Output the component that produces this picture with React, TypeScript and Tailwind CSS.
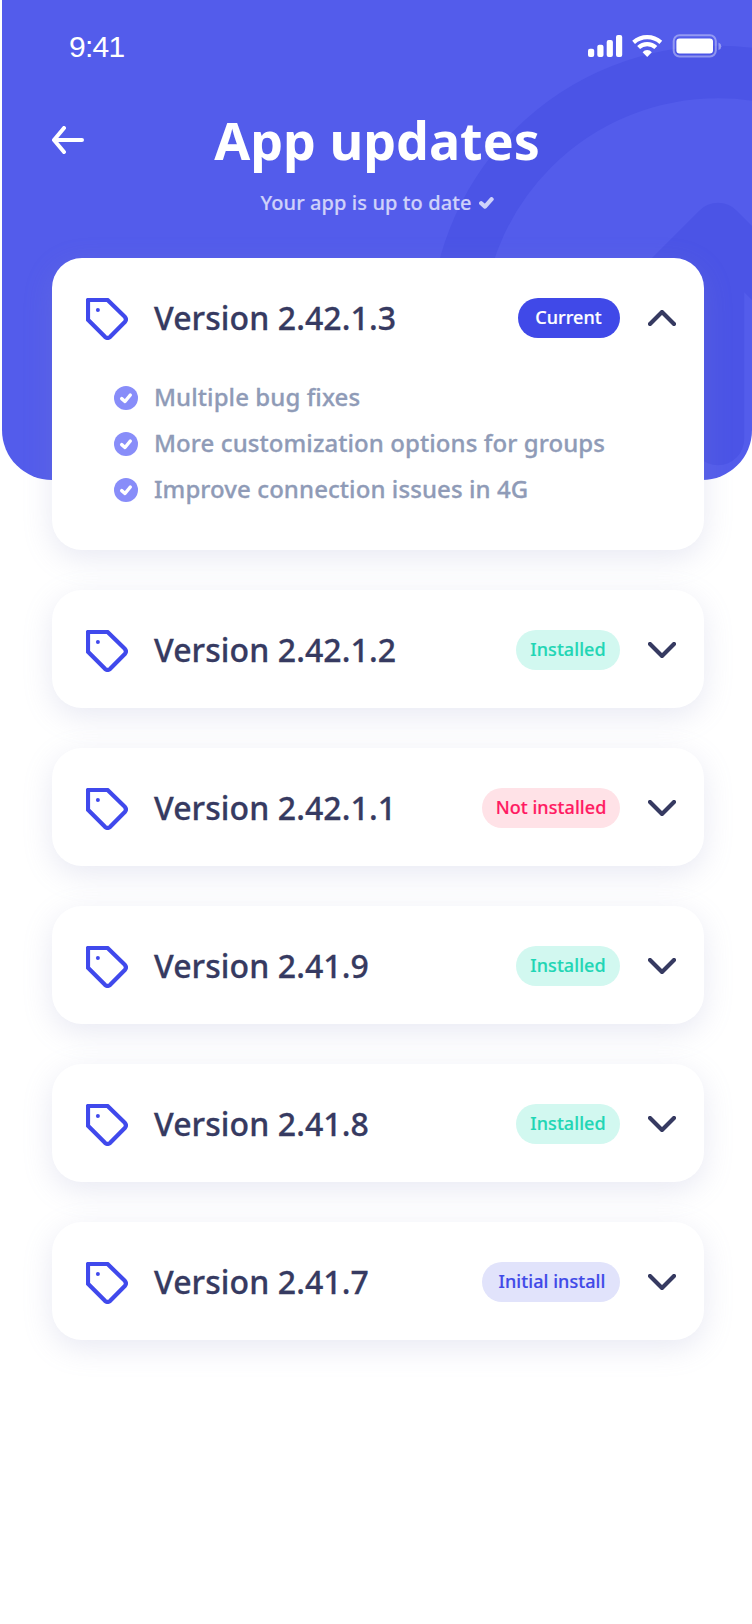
import React from "react";

type Tone = "current" | "installed" | "missing" | "initial";

interface Release {
  version: string;
  status: string;
  tone: Tone;
  notes?: string[];
}

const releases: Release[] = [
  {
    version: "Version 2.42.1.3",
    status: "Current",
    tone: "current",
    notes: [
      "Multiple bug fixes",
      "More customization options for groups",
      "Improve connection issues in 4G",
    ],
  },
  { version: "Version 2.42.1.2", status: "Installed", tone: "installed" },
  { version: "Version 2.42.1.1", status: "Not installed", tone: "missing" },
  { version: "Version 2.41.9", status: "Installed", tone: "installed" },
  { version: "Version 2.41.8", status: "Installed", tone: "installed" },
  { version: "Version 2.41.7", status: "Initial install", tone: "initial" },
];

const tones: Record<Tone, string> = {
  current: "w-[102px] bg-[#4049e8] pr-px text-white",
  installed: "w-[104px] bg-[#d2f8f0] text-[#1fd6b5]",
  missing: "w-[138px] bg-[#ffe2e7] text-[#ff1a62]",
  initial: "w-[138px] bg-[#e1e3fb] pl-[2px] text-[#4049e8]",
};

function TagIcon() {
  return (
    <svg className="mt-10 size-[42px] shrink-0" viewBox="0 0 42 42" fill="none">
      <path
        d="M2 2H21.6L38.8 18.8Q41 21.5 38.8 24L24.2 38.8Q21.5 41 19 38.8L2 21.8Z"
        stroke="#4049ec"
        strokeWidth="4.2"
        strokeLinejoin="round"
      />
      <circle cx="11.9" cy="12" r="2" fill="#4049ec" />
    </svg>
  );
}

function Chevron({ open }: { open: boolean }) {
  return (
    <svg className="mt-[52px] ml-7 h-4 w-7 shrink-0" viewBox="0 0 28 16" fill="none">
      <path
        d={open ? "M2 14L14 2L26 14" : "M2 2L14 14L26 2"}
        stroke="#363a61"
        strokeWidth="4.2"
        strokeLinecap="round"
        strokeLinejoin="round"
      />
    </svg>
  );
}

function Note({ text }: { text: string }) {
  return (
    <li className="flex h-[46px] items-center gap-4">
      <svg className="size-6 shrink-0" viewBox="0 0 24 24" fill="none">
        <circle cx="12" cy="12" r="12" fill="#888df9" />
        <path d="M7.7 12.6L11 15.5L16.3 9" stroke="white" strokeWidth="3.4" strokeLinecap="round" strokeLinejoin="round" />
      </svg>
      <span className="pb-[2px] text-2xl font-medium tracking-[0.08px] whitespace-nowrap text-[#8f9bb7] [-webkit-text-stroke:0.3px]">
        {text}
      </span>
    </li>
  );
}

function ReleaseCard({ release }: { release: Release }) {
  const open = Boolean(release.notes);
  return (
    <article className="rounded-[30px] bg-white shadow-[0_8px_30px_rgba(138,146,194,0.2)]">
      <div className="flex h-[117px] items-start pr-7 pl-[34px]">
        <TagIcon />
        <h2 className="mt-9 ml-[26px] flex-1 text-[32px] leading-[48px] font-medium tracking-[0.09px] whitespace-nowrap text-[#363a61] [-webkit-text-stroke:0.3px]">
          {release.version}
        </h2>
        <span
          className={`mt-10 flex h-10 shrink-0 items-center justify-center rounded-full pb-[2px] text-lg font-medium tracking-[0.07px] whitespace-nowrap [-webkit-text-stroke:0.2px] ${tones[release.tone]}`}
        >
          {release.status}
        </span>
        <Chevron open={open} />
      </div>
      {release.notes ? (
        <ul className="h-[175px] pl-[62px]">
          {release.notes.map((note) => (
            <Note key={note} text={note} />
          ))}
        </ul>
      ) : (
        <div className="h-px" />
      )}
    </article>
  );
}

function StatusBar() {
  return (
    <div className="flex h-[88px] items-start justify-between pr-[30px] pl-[67px] text-white">
      <span className="mt-[29px] font-['Liberation_Sans',sans-serif] text-[30px] leading-9 tracking-[-0.7px]">9:41</span>
      <svg className="mt-[34px] h-6 w-[134px]" viewBox="0 0 134 24" fill="none">
        <g fill="white">
          <rect x="0" y="14.7" width="6.2" height="8.3" rx="2" />
          <rect x="9.3" y="10.7" width="6.2" height="12.3" rx="2" />
          <rect x="18.7" y="6" width="6.2" height="17" rx="2" />
          <rect x="28" y="1" width="6.2" height="22" rx="2" />
          <path d="M59.2 22.9L54.6 18.2A6 6 0 0 1 63.8 18.2Z" />
        </g>
        <path d="M45.6 8.4A20.4 20.4 0 0 1 72.8 8.4" stroke="white" strokeWidth="4.2" />
        <path d="M50.6 13.6A12.4 12.4 0 0 1 67.8 13.6" stroke="white" strokeWidth="4.2" />
        <rect x="85.7" y="1.3" width="42.1" height="21.1" rx="5.8" stroke="white" strokeOpacity=".38" strokeWidth="2" />
        <rect x="88.4" y="4.4" width="36.6" height="15" rx="3.2" fill="white" />
        <path d="M130.5 8.4Q133.3 9.4 133.3 12.2T130.5 16Z" fill="white" fillOpacity=".4" />
      </svg>
    </div>
  );
}

export default function App() {
  return (
    <main className="h-[1624px] w-[752px] overflow-hidden bg-white pl-[2px] font-['Noto_Sans',sans-serif]">
      <header className="relative h-[480px] overflow-hidden rounded-b-[50px] bg-[#535ceb]">
        <svg className="absolute inset-0 h-[480px] w-[750px]" viewBox="2 0 750 480" fill="none">
          <g stroke="#4b54e6" strokeWidth="52.4" strokeLinecap="round" strokeLinejoin="round">
            <circle cx="718" cy="334" r="262" />
            <path d="M613 334L718 229L823 334M718 229V439" />
          </g>
        </svg>
        <div className="relative">
          <StatusBar />
          <div className="relative flex justify-center">
            <svg className="absolute top-[38px] left-[50px] h-7 w-8" viewBox="0 0 32 28" fill="none">
              <path d="M12 2L2 14L12 26M2 14H30" stroke="white" strokeWidth="4" strokeLinecap="round" strokeLinejoin="round" />
            </svg>
            <h1 className="mt-[17px] text-[52px] leading-[70px] font-bold text-white">App updates</h1>
          </div>
          <p className="mt-[14px] flex items-center justify-center gap-[7px] text-xl leading-7 font-medium tracking-[0.09px] text-[#cfd2fa] [-webkit-text-stroke:0.2px]">
            Your app is up to date
            <svg className="h-3 w-[15px]" viewBox="0 0 15 12" fill="none">
              <path d="M2.2 6.2L6 9.6L12.6 2.2" stroke="currentColor" strokeWidth="4.2" strokeLinecap="round" strokeLinejoin="round" />
            </svg>
          </p>
        </div>
      </header>
      <section className="relative -mt-[222px] flex flex-col gap-10 pr-12 pl-[50px]">
        {releases.map((release) => (
          <ReleaseCard key={release.version} release={release} />
        ))}
      </section>
    </main>
  );
}
